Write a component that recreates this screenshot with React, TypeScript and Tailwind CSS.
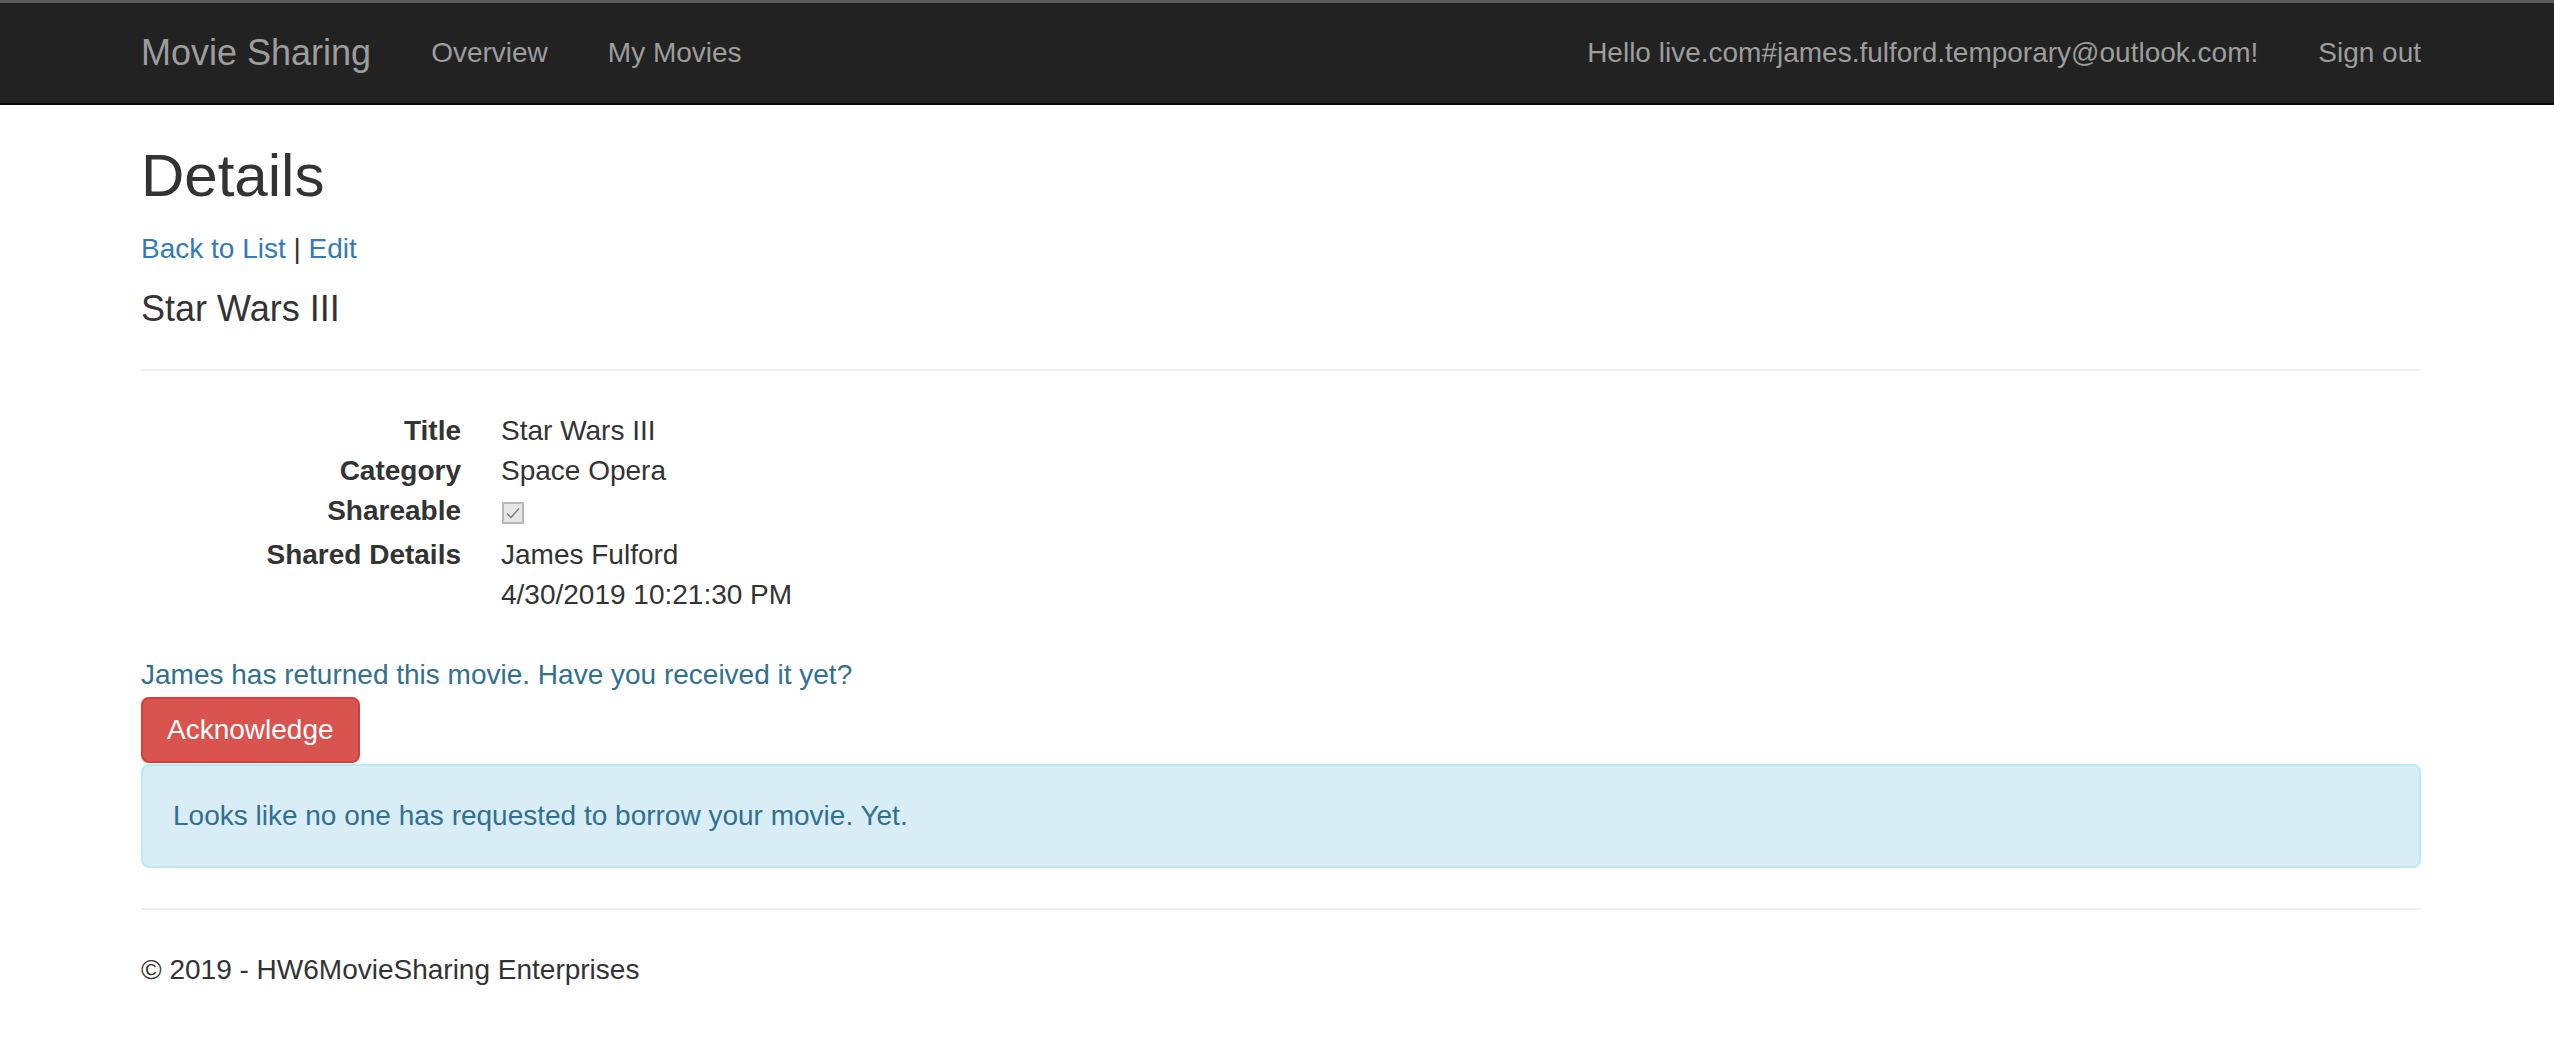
import React from "react";

const font = { fontFamily: '"Liberation Sans", Arial, Helvetica, sans-serif' };

function Navbar() {
  return (
    <div className="w-full">
      <div className="h-[3px] bg-[#5a5a5a]" />
      <div className="h-[100px] bg-[#222222] border-b-2 border-[#080808] box-content">
        <div className="ml-[111px] w-[2340px] px-[30px] flex items-start justify-between">
          <div className="flex items-start">
            <a className="text-[36px] leading-[40px] py-[30px] pr-[30px] text-[#9d9d9d] whitespace-nowrap">
              Movie Sharing
            </a>
            <ul className="flex">
              <li>
                <a className="block text-[28px] leading-[40px] py-[30px] px-[30px] text-[#9d9d9d] whitespace-nowrap">
                  Overview
                </a>
              </li>
              <li>
                <a className="block text-[28px] leading-[40px] py-[30px] px-[30px] text-[#9d9d9d] whitespace-nowrap">
                  My Movies
                </a>
              </li>
            </ul>
          </div>
          <ul className="flex">
            <li>
              <a className="block text-[28px] leading-[40px] py-[30px] px-[30px] text-[#9d9d9d] whitespace-nowrap">
                Hello live.com#james.fulford.temporary@outlook.com!
              </a>
            </li>
            <li>
              <a className="block text-[28px] leading-[40px] py-[30px] pl-[30px] text-[#9d9d9d] whitespace-nowrap">
                Sign out
              </a>
            </li>
          </ul>
        </div>
      </div>
    </div>
  );
}

function Row({ label, children, tall }: { label: string; children: React.ReactNode; tall?: boolean }) {
  return (
    <div className="flex">
      <dt className="w-[320px] shrink-0 text-right font-bold whitespace-nowrap">{label}</dt>
      <dd className={"ml-[40px] " + (tall ? "" : "")}>{children}</dd>
    </div>
  );
}

export default function App() {
  return (
    <div className="min-h-[1048px] bg-white text-[#333333] text-[28px] leading-[40px]" style={font}>
      <Navbar />
      <div className="ml-[111px] w-[2340px] px-[30px]">
        <h2 className="mt-[38px] mb-[20px] text-[60px] leading-[66px] font-normal">Details</h2>
        <p className="mb-[20px]">
          <a className="text-[#337ab7]">Back to List</a> | <a className="text-[#337ab7]">Edit</a>
        </p>
        <div>
          <h4 className="text-[36px] leading-[39.6px] font-normal mb-[40px]">Star Wars III</h4>
          <hr className="border-0 border-t-2 border-[#eeeeee] mb-[40px]" />
          <dl className="mb-[40px]">
            <Row label="Title">Star Wars III</Row>
            <Row label="Category">Space Opera</Row>
            <div className="flex h-[44px]">
              <dt className="w-[320px] shrink-0 text-right font-bold whitespace-nowrap">Shareable</dt>
              <dd className="ml-[40px] pt-[11px] pl-[1px]">
                <span className="flex items-center justify-center w-[22px] h-[22px] border-2 border-[#b8b8b8] bg-[#e6e6e6]">
                  <svg width="16" height="16" viewBox="0 0 16 16" fill="none">
                    <path d="M2 8.5 L6 12.5 L14 3.5" stroke="#7a7a7a" strokeWidth="1.4" />
                  </svg>
                </span>
              </dd>
            </div>
            <Row label="Shared Details">
              James Fulford
              <br />
              4/30/2019 10:21:30 PM
            </Row>
          </dl>
          <div className="text-[#31708f]">James has returned this movie. Have you received it yet?</div>
          <div className="flex mt-[2px]">
            <button className="text-white bg-[#d9534f] border-2 border-[#d43f3a] rounded-[8px] px-[24px] py-[11px] text-[28px] leading-[40px]">
              Acknowledge
            </button>
          </div>
          <div className="mt-[1px] mb-[40px] p-[30px] border-2 border-[#bce8f1] bg-[#d9edf7] text-[#31708f] rounded-[8px]">
            Looks like no one has requested to borrow your movie. Yet.
          </div>
        </div>
        <hr className="border-0 border-t-2 border-[#eeeeee] mb-[40px]" />
        <footer>
          <p className="mb-[20px]">© 2019 - HW6MovieSharing Enterprises</p>
        </footer>
      </div>
    </div>
  );
}
